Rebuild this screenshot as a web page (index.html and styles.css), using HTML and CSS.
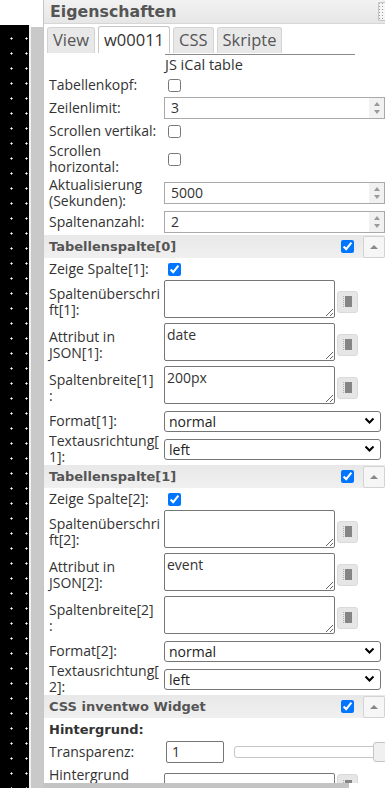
FILE: index.html
```html
<!DOCTYPE html>
<html lang="de">
<head>
    <meta charset="UTF-8">
    <meta name="viewport" content="width=device-width, initial-scale=1.0">
    <title>Eigenschaften</title>
    <link rel="stylesheet" href="styles.css">
</head>
<body>
    <div class="canvas">
        <div class="canvas-top"></div>
        <div class="canvas-body">
            <div class="dots"></div>
            <div class="edge"></div>
            <div class="gutter"></div>
        </div>
    </div>

    <div class="panel">
        <header class="panel-head">
            <h1>Eigenschaften</h1>
            <span class="grip"></span>
        </header>

        <ul class="tabs">
            <li>View</li>
            <li class="active">w00011</li>
            <li>CSS</li>
            <li>Skripte</li>
        </ul>

        <section class="attrs">
            <p class="caption">JS iCal table</p>

            <div class="row">
                <label>Tabellenkopf:</label>
                <div class="val"><input type="checkbox"></div>
            </div>
            <div class="row num-row">
                <label>Zeilenlimit:</label>
                <div class="val"><div class="num"><span>3</span><span class="spin"><b></b><b></b></span></div></div>
            </div>
            <div class="row">
                <label>Scrollen vertikal:</label>
                <div class="val"><input type="checkbox"></div>
            </div>
            <div class="row two">
                <label>Scrollen<br>horizontal:</label>
                <div class="val"><input type="checkbox"></div>
            </div>
            <div class="row two">
                <label>Aktualisierung<br>(Sekunden):</label>
                <div class="val"><div class="num"><span>5000</span><span class="spin"><b></b><b></b></span></div></div>
            </div>
            <div class="row num-row">
                <label>Spaltenanzahl:</label>
                <div class="val"><div class="num"><span>2</span><span class="spin"><b></b><b></b></span></div></div>
            </div>

            <div class="group">
                <h2>Tabellenspalte[0]</h2>
                <input type="checkbox" checked>
                <span class="fold"></span>
            </div>
            <div class="row">
                <label>Zeige Spalte[1]:</label>
                <div class="val"><input type="checkbox" checked></div>
            </div>
            <div class="row ta">
                <label>Spaltenüberschri<br>ft[1]:</label>
                <div class="val"><textarea></textarea><span class="pick"></span></div>
            </div>
            <div class="row ta">
                <label>Attribut in<br>JSON[1]:</label>
                <div class="val"><textarea>date</textarea><span class="pick"></span></div>
            </div>
            <div class="row ta">
                <label>Spaltenbreite[1]<br>:</label>
                <div class="val"><textarea>200px</textarea><span class="pick"></span></div>
            </div>
            <div class="row num-row">
                <label>Format[1]:</label>
                <div class="val"><div class="sel">normal</div></div>
            </div>
            <div class="row sel-two">
                <label>Textausrichtung[<br>1]:</label>
                <div class="val"><div class="sel">left</div></div>
            </div>

            <div class="group">
                <h2>Tabellenspalte[1]</h2>
                <input type="checkbox" checked>
                <span class="fold"></span>
            </div>
            <div class="row">
                <label>Zeige Spalte[2]:</label>
                <div class="val"><input type="checkbox" checked></div>
            </div>
            <div class="row ta">
                <label>Spaltenüberschri<br>ft[2]:</label>
                <div class="val"><textarea></textarea><span class="pick"></span></div>
            </div>
            <div class="row ta">
                <label>Attribut in<br>JSON[2]:</label>
                <div class="val"><textarea>event</textarea><span class="pick"></span></div>
            </div>
            <div class="row ta">
                <label>Spaltenbreite[2]<br>:</label>
                <div class="val"><textarea></textarea><span class="pick"></span></div>
            </div>
            <div class="row num-row">
                <label>Format[2]:</label>
                <div class="val"><div class="sel">normal</div></div>
            </div>
            <div class="row sel-two">
                <label>Textausrichtung[<br>2]:</label>
                <div class="val"><div class="sel">left</div></div>
            </div>

            <div class="group">
                <h2>CSS inventwo Widget</h2>
                <input type="checkbox" checked>
                <span class="fold"></span>
            </div>
            <div class="row">
                <h3>Hintergrund:</h3>
            </div>
            <div class="row num-row">
                <label>Transparenz:</label>
                <div class="val">
                    <div class="small">1</div>
                    <div class="slider"><span class="track"></span><span class="thumb"></span></div>
                </div>
            </div>
            <div class="row ta late">
                <label>Hintergrund</label>
                <div class="val"><textarea></textarea><span class="pick"></span></div>
            </div>
        </section>

        <div class="hscroll"></div>
    </div>
</body>
</html>
```

FILE: styles.css
```css
*,
*::before,
*::after {
    box-sizing: border-box;
    margin: 0;
    padding: 0;
}

html,
body {
    height: 100%;
}

body {
    display: flex;
    overflow: hidden;
    background: #fff;
    color: #333;
    font-family: "Open Sans", sans-serif;
    font-size: 14px;
}

/* editor canvas strip on the left */
.canvas {
    display: flex;
    flex-direction: column;
    flex: 0 0 43px;
}

.canvas-top {
    height: 25px;
}

.canvas-body {
    display: flex;
    flex: 1;
}

.dots {
    width: 29px;
    background: #000 radial-gradient(circle, #fff 0.8px, transparent 1.4px) 4px 6px / 15px 15px;
}

.edge {
    width: 2px;
    background: #f2f2f2;
}

.gutter {
    flex: 1;
    margin-top: 2px;
    background: #c9c9c9;
}

/* properties panel */
.panel {
    display: flex;
    flex-direction: column;
    flex: 1;
    min-width: 0;
    overflow: hidden;
    border-left: 1px solid #c5c5c5;
}

.panel-head {
    display: flex;
    align-items: center;
    justify-content: space-between;
    height: 24px;
    padding-left: 6px;
    background: linear-gradient(#f2f2f2, #e6e6e6);
    border-bottom: 1px solid #d6d6d6;
}

.panel-head h1 {
    color: #555;
    font: bold 15.8px "DejaVu Sans", sans-serif;
}

.grip {
    width: 7px;
    height: 19px;
    border: 1px solid #c5c5c5;
    border-right: 0;
    border-radius: 2px 0 0 2px;
    background: #f6f6f6 radial-gradient(circle, #999 0.6px, transparent 1px) 2px 5px / 3px 3px;
}

.tabs {
    display: flex;
    gap: 3px;
    height: 31px;
    padding: 3px 0 0 3px;
    list-style: none;
    background: linear-gradient(#8a8a8a, #8a8a8a) 121px 100% / 190px 1px no-repeat;
}

.tabs li {
    height: 26px;
    padding: 0 5px;
    color: #555;
    font-size: 16.5px;
    line-height: 24px;
    background: #e8e8e8;
    border: 1px solid #d3d3d3;
    border-bottom: 0;
    border-radius: 3px 3px 0 0;
}

.tabs .active {
    height: 27px;
    margin-top: -1px;
    padding-top: 1px;
    color: #333;
    background: #fff;
    border-color: #c5c5c5;
}

.attrs {
    flex: 1;
    min-height: 0;
    overflow: hidden;
}

.caption {
    height: 19px;
    padding-left: 121px;
    font-size: 14.5px;
    line-height: 19px;
}

.row {
    display: grid;
    grid-template-columns: 120px 1fr;
    align-items: center;
    height: 22px;
}

.row label {
    padding-left: 5px;
    line-height: 16px;
}

.row h3 {
    padding-left: 5px;
    font: bold 13px "DejaVu Sans", sans-serif;
}

.num-row {
    height: 24px;
}

.two {
    height: 34px;
}

.sel-two {
    height: 31px;
}

.ta {
    height: 43px;
}

.late {
    height: 52px;
    align-items: start;
}

.late label {
    padding-top: 3px;
}

.late textarea {
    margin: 9px 0 0;
}

.late .pick {
    margin-top: 10px;
}

.val {
    display: flex;
    align-items: center;
    min-width: 0;
}

.late .val {
    align-items: flex-start;
}

input[type=checkbox] {
    width: 13px;
    height: 13px;
    margin: 3px 3px 3px 4px;
}

.num {
    display: flex;
    flex: 1;
    height: 22px;
    border: 1px solid #a9a9a9;
}

.num span:first-child {
    flex: 1;
    padding-left: 6px;
    line-height: 20px;
}

.spin {
    display: flex;
    flex-direction: column;
    justify-content: center;
    align-items: center;
    gap: 4px;
    width: 15px;
    background: #f1f1f1;
}

.spin b {
    border: 3.5px solid transparent;
    border-top: 0;
    border-bottom: 4px solid #9a9a9a;
}

.spin b + b {
    transform: rotate(180deg);
}

textarea {
    width: 171px;
    height: 38px;
    margin-bottom: 5px;
    padding: 1px 2px;
    color: #333;
    font: 14px "Open Sans", sans-serif;
    border: 1px solid #767676;
    border-radius: 2px;
    resize: both;
}

.pick {
    width: 21px;
    height: 22px;
    margin-left: 2px;
    background: #e6e6e6 url("data:image/svg+xml,%3Csvg xmlns='http://www.w3.org/2000/svg' width='9' height='11'%3E%3Crect x='2' y='0' width='7' height='11' fill='%23858585'/%3E%3Cg fill='%23b0b0b0'%3E%3Crect x='0' y='0' width='1' height='1'/%3E%3Crect x='0' y='2' width='1' height='1'/%3E%3Crect x='0' y='4' width='1' height='1'/%3E%3Crect x='0' y='6' width='1' height='1'/%3E%3Crect x='0' y='8' width='1' height='1'/%3E%3Crect x='0' y='10' width='1' height='1'/%3E%3C/g%3E%3C/svg%3E") center / 9px 11px no-repeat;
    border: 1px solid #dadada;
    border-radius: 3px;
}

.sel {
    display: flex;
    align-items: center;
    justify-content: space-between;
    width: 217px;
    height: 21px;
    padding: 0 4px;
    color: #222;
    border: 1px solid #767676;
    border-radius: 3px;
}

.sel::after {
    content: "";
    width: 11px;
    height: 8px;
    margin-right: 1px;
    background: url("data:image/svg+xml,%3Csvg xmlns='http://www.w3.org/2000/svg' width='11' height='8'%3E%3Cpath d='M1.5 1.5l4 4 4-4' fill='none' stroke='%23000' stroke-width='2'/%3E%3C/svg%3E") no-repeat;
}

.group {
    display: flex;
    align-items: center;
    height: 23px;
    margin-top: 1px;
    background: linear-gradient(#e8e8e8, #f0f0f0);
}

.group h2 {
    flex: 1;
    padding-left: 5px;
    color: #555;
    font: bold 13px "DejaVu Sans", sans-serif;
}

.group input[type=checkbox] {
    margin: 0 9px 0 0;
}

.fold {
    display: flex;
    align-items: center;
    justify-content: center;
    width: 22px;
    height: 22px;
    background: #f6f6f6;
    border: 1px solid #d3d3d3;
    border-radius: 2px;
}

.fold::before {
    content: "";
    border: 4px solid transparent;
    border-top: 0;
    border-bottom: 4px solid #888;
}

.small {
    width: 58px;
    height: 22px;
    margin-left: 2px;
    padding-left: 5px;
    line-height: 20px;
    border: 1px solid #767676;
    border-radius: 2px;
}

.slider {
    display: flex;
    align-items: center;
    flex: 1;
    margin-left: 10px;
}

.track {
    flex: 1;
    height: 12px;
    background: #fff;
    border: 1px solid #c5c5c5;
    border-radius: 3px;
}

.thumb {
    flex: 0 0 14px;
    height: 20px;
    margin: 0 -2px 0 -4px;
    background: #f0f0f0;
    border: 1px solid #c5c5c5;
    border-radius: 3px;
}

.hscroll {
    flex: 0 0 5px;
    width: 305px;
    background: #c4c4c4;
}
```
